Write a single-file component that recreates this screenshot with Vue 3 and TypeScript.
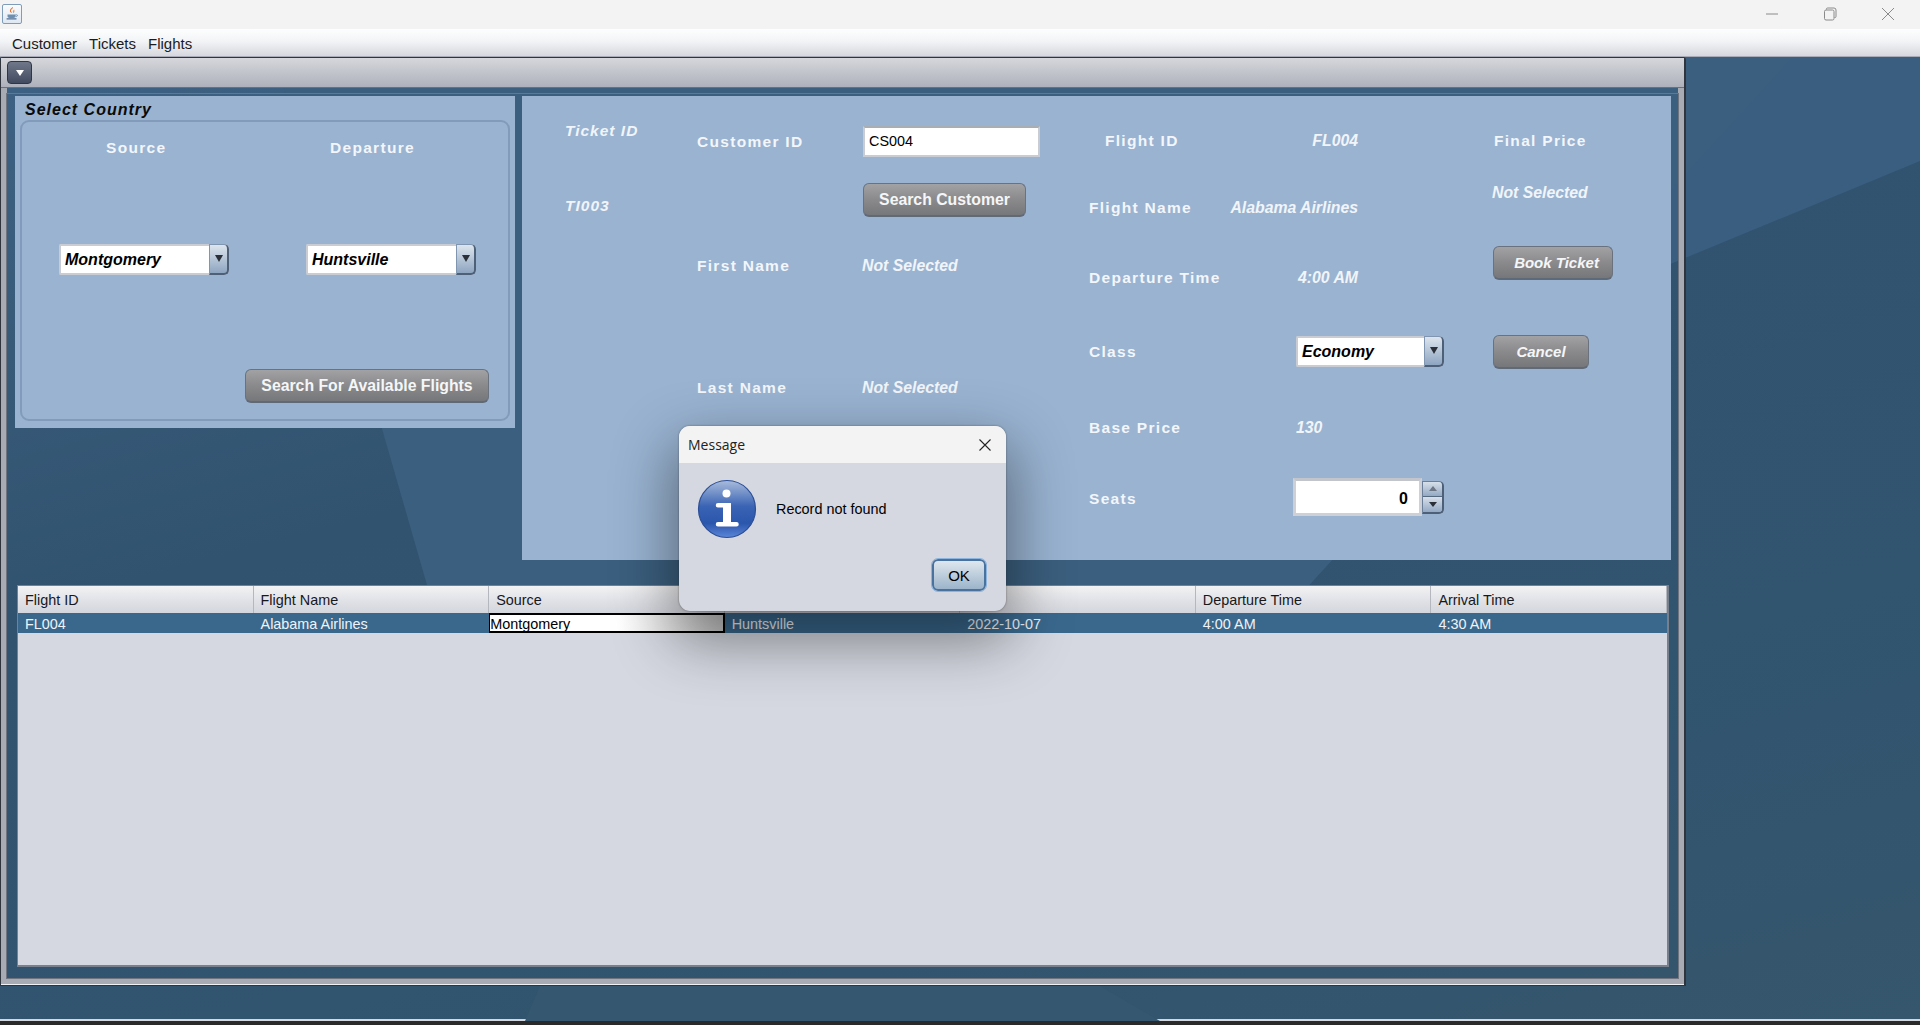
<template>
  <div class="app">
    <div class="titlebar">
      <div class="java-icon">
        <svg width="20" height="19" viewBox="0 0 20 19">
          <path d="M11 2c1 2-3 3-2 5 .4 1 1 1.500 1 2-2-1-3-2-2-4 .6-1.200 2.500-1.800 3-3z" fill="#e8742a" />
          <path d="M12.500 5c-1 1-2 1.500-1.500 3 .2.600.4 1 .2 1.300 1.300-.7 2-1.700 1.300-4.300z" fill="#f09a50" />
          <path d="M5 10.500h9v2c0 1.500-1.500 2-4.500 2S5 14 5 12.500z" fill="#6f8fb0" />
          <path d="M14 11h1.500c1 0 1 2-1.500 2" fill="none" stroke="#6f8fb0" />
          <path d="M4 15.500h11" stroke="#4f7196" stroke-width="1.300" />
        </svg>
      </div>
      <div class="win-controls">
        <svg class="min" width="14" height="14" viewBox="0 0 14 14"><path d="M1 7h12" stroke="#8a8a8a" /></svg>
        <svg class="max" width="14" height="14" viewBox="0 0 14 14">
          <path d="M3.500 2.500V2a1 1 0 0 1 1-1H11a2 2 0 0 1 2 2v6.500a1 1 0 0 1-1 1h-.5" fill="none" stroke="#8a8a8a" />
          <rect x="1.500" y="3" width="9.500" height="10" rx="1.500" fill="none" stroke="#8a8a8a" />
        </svg>
        <svg class="close" width="14" height="14" viewBox="0 0 14 14"><path d="M1 1l12 12M13 1L1 13" stroke="#8a8a8a" /></svg>
      </div>
    </div>

    <div class="menubar">
      <span v-for="m in menus" :key="m">{{ m }}</span>
    </div>

    <div class="desktop">
      <svg class="wallpaper" width="1920" height="964" viewBox="0 0 1920 964">
        <polygon points="1300,0 1920,0 1920,104 1300,360" fill="#3a5e80" />
        <polygon points="275,0 429,535 1303,535 1793,0" fill="#3b5f7e" />
        <polygon points="525,964 540,929 1100,929 1160,964" fill="#35576f" />
      </svg>

      <div class="frame">
        <div class="frame-title">
          <div class="frame-btn"><i></i></div>
        </div>
        <div class="frame-body">
          <div class="top-row">
            <section class="panel-left">
              <div class="group-title">Select Country</div>
              <div class="fieldset">
                <div class="route">
                  <div class="route-col">
                    <div class="label source">Source</div>
                    <div class="combo">
                      <span>Montgomery</span>
                      <div class="combo-arrow"><i></i></div>
                    </div>
                  </div>
                  <div class="route-col">
                    <div class="label departure">Departure</div>
                    <div class="combo">
                      <span>Huntsville</span>
                      <div class="combo-arrow"><i></i></div>
                    </div>
                  </div>
                </div>
                <button class="btn btn-flights">Search For Available Flights</button>
              </div>
            </section>

            <section class="panel-right">
              <div class="col-ticket">
                <div class="value spaced">Ticket ID</div>
                <div class="value spaced ticket-no">TI003</div>
              </div>

              <div class="col-customer">
                <div class="cust-row first">
                  <div class="label">Customer ID</div>
                  <div class="textfield">CS004</div>
                </div>
                <button class="btn btn-customer">Search Customer</button>
                <div class="cust-row name1">
                  <div class="label">First Name</div>
                  <div class="value">Not Selected</div>
                </div>
                <div class="cust-row name2">
                  <div class="label">Last Name</div>
                  <div class="value">Not Selected</div>
                </div>
              </div>

              <div class="col-flight">
                <div class="fl-row">
                  <div class="label flight-id">Flight ID</div>
                  <div class="value right">FL004</div>
                </div>
                <div class="fl-row">
                  <div class="label">Flight Name</div>
                  <div class="value right">Alabama Airlines</div>
                </div>
                <div class="fl-row">
                  <div class="label">Departure Time</div>
                  <div class="value right">4:00 AM</div>
                </div>
                <div class="fl-row">
                  <div class="label">Class</div>
                  <div class="combo combo-class">
                    <span>Economy</span>
                    <div class="combo-arrow"><i></i></div>
                  </div>
                </div>
                <div class="fl-row">
                  <div class="label">Base Price</div>
                  <div class="value slot">130</div>
                </div>
                <div class="fl-row">
                  <div class="label">Seats</div>
                  <div class="spinner">
                    <div class="spinner-field">0</div>
                    <div class="spinner-btns">
                      <div class="up"><i></i></div>
                      <div class="down"><i></i></div>
                    </div>
                  </div>
                </div>
              </div>

              <div class="col-price">
                <div class="label final">Final Price</div>
                <div class="value price">Not Selected</div>
                <button class="btn btn-italic btn-book">Book Ticket</button>
                <button class="btn btn-italic btn-cancel">Cancel</button>
              </div>
            </section>
          </div>

          <div class="table">
            <div class="thead">
              <div v-for="c in columns" :key="c" class="th">{{ c }}</div>
            </div>
            <div class="tr">
              <template v-for="(cell, i) in row" :key="i">
                <div v-if="i === 2" class="td editing">{{ cell }}</div>
                <div v-else class="td">{{ cell }}</div>
              </template>
            </div>
          </div>
        </div>
      </div>
    </div>

    <div class="taskline"></div>

    <div class="dialog">
      <div class="dialog-title">
        <span>Message</span>
        <svg width="14" height="14" viewBox="0 0 14 14"><path d="M1.500 1.500l11 11M12.500 1.500l-11 11" stroke="#222" stroke-width="1.100" /></svg>
      </div>
      <div class="dialog-body">
        <div class="dialog-msg">
          <svg width="60" height="60" viewBox="0 0 60 60">
            <defs>
              <linearGradient id="info" x1="0" y1="0" x2="0" y2="1">
                <stop offset="0" stop-color="#a9bcdc" />
                <stop offset="0.45" stop-color="#3a64b4" />
                <stop offset="0.75" stop-color="#2a56ac" />
                <stop offset="1" stop-color="#5b86d8" />
              </linearGradient>
            </defs>
            <circle cx="30" cy="30" r="28.500" fill="url(#info)" stroke="#2c4f96" stroke-width="1.200" />
            <circle cx="29.500" cy="14.500" r="4" fill="#fff" />
            <path d="M21 24h13v19h5.500a2 2 0 0 1 0 4.500H21a2 2 0 0 1 0-4.500h5V28.500h-5a2.200 2.200 0 0 1 0-4.500z" fill="#fff" />
          </svg>
          <span>Record not found</span>
        </div>
        <button class="ok">OK</button>
      </div>
    </div>
  </div>
</template>

<script setup lang="ts">
const menus: string[] = ['Customer', 'Tickets', 'Flights']

const columns: string[] = [
  'Flight ID',
  'Flight Name',
  'Source',
  'Departure',
  'Date',
  'Departure Time',
  'Arrival Time'
]

const row: string[] = [
  'FL004',
  'Alabama Airlines',
  'Montgomery',
  'Huntsville',
  '2022-10-07',
  '4:00 AM',
  '4:30 AM'
]
</script>

<style>
html,
body {
  margin: 0;
  overflow: hidden;
}
</style>

<style scoped>
.app {
  position: relative;
  width: 1920px;
  height: 1025px;
  display: flex;
  flex-direction: column;
  overflow: hidden;
  font-family: 'Liberation Sans', Arial, sans-serif;
}

.titlebar {
  height: 29px;
  flex: none;
  background: #f3f3f3;
  display: flex;
  align-items: center;
  justify-content: space-between;
}

.java-icon {
  width: 18px;
  height: 18px;
  margin: -2px 0 0 2px;
  border: 1px solid #7f9db9;
  border-radius: 2px;
  background: linear-gradient(#fafbfd, #dfe8f2);
  display: flex;
  align-items: center;
  justify-content: center;
  overflow: hidden;
}

.win-controls {
  display: flex;
  align-items: center;
  margin-right: 25px;
  gap: 44px;
  margin-top: -1px;
}

.menubar {
  height: 28px;
  flex: none;
  box-sizing: border-box;
  padding: 1px 0 0 12px;
  display: flex;
  align-items: center;
  gap: 12px;
  font-size: 15px;
  color: #1b1b1f;
  background: linear-gradient(#fdfefe, #f3f4f6 45%, #d6d8df);
  border-bottom: 1px solid #a9acb6;
}

.desktop {
  position: relative;
  flex: 1;
  background: linear-gradient(165deg, #3e6284 0%, #31536f 38%, #31546f 70%, #35566c 100%);
}

.wallpaper {
  position: absolute;
  left: 0;
  top: 0;
}

.frame {
  position: relative;
  box-sizing: border-box;
  width: 1686px;
  height: 929px;
  border: 1px solid #30343c;
  border-width: 1px 2px 2px 1px;
  border-radius: 3px 3px 0 0;
  display: flex;
  flex-direction: column;
}

.frame-title {
  height: 29px;
  flex: none;
  background: linear-gradient(#d6d7dc, #aeb1bb);
  border-bottom: 1px solid #6d7079;
  display: flex;
  align-items: center;
  padding-left: 6px;
}

.frame-btn {
  width: 23px;
  height: 21px;
  border: 1px solid #2f3644;
  border-radius: 4px;
  background: linear-gradient(#6f7789, #434b61);
  display: flex;
  align-items: center;
  justify-content: center;
}

.frame-btn i {
  width: 0;
  height: 0;
  border-left: 4px solid transparent;
  border-right: 4px solid transparent;
  border-top: 6px solid #fff;
}

.frame-body {
  flex: 1;
  min-height: 0;
  box-sizing: border-box;
  border: solid #a8abb4;
  border-width: 0 6px 6px 6px;
  outline: 1px solid #70747e;
  outline-offset: -6px;
  box-shadow: 0 1px 0 #f0f1f4;
  padding: 8px 0 0 8px;
}

.top-row {
  display: flex;
  gap: 7px;
  height: 464px;
  align-items: flex-start;
}

.panel-left {
  width: 500px;
  height: 332px;
  box-sizing: border-box;
  background: #99b3d1;
  padding: 5px 5px 7px;
  display: flex;
  flex-direction: column;
}

.group-title {
  height: 19px;
  line-height: 18px;
  padding-left: 5px;
  font-size: 16px;
  font-weight: bold;
  font-style: italic;
  letter-spacing: 1px;
  color: #0a0a0a;
}

.fieldset {
  flex: 1;
  box-sizing: border-box;
  border: 2px solid #829bba;
  border-radius: 9px;
  display: flex;
  flex-direction: column;
  padding: 16px 0 0 37px;
}

.route {
  display: flex;
  gap: 77px;
}

.route-col {
  width: 170px;
}

.label {
  font-size: 15.500px;
  font-weight: bold;
  letter-spacing: 1.300px;
  line-height: 20px;
  color: #f3f6fa;
  white-space: nowrap;
}

.label.source {
  padding-left: 47px;
}

.label.departure {
  padding-left: 24px;
}

.route-col .combo {
  margin-top: 86px;
}

.combo {
  box-sizing: border-box;
  width: 170px;
  height: 31px;
  display: flex;
  background: #fff;
  border: 2px solid #c9cdd3;
  border-right: 0;
  border-radius: 2px 5px 5px 2px;
}

.combo span {
  flex: 1;
  padding: 4px 0 0 4px;
  line-height: 20px;
  font-size: 16px;
  font-weight: bold;
  font-style: italic;
  color: #000;
}

.combo-arrow {
  width: 20px;
  margin: -2px 0;
  box-sizing: border-box;
  border: 1px solid #8096b0;
  border-right: 2px solid #4e6078;
  border-bottom: 2px solid #4e6078;
  border-radius: 0 5px 5px 0;
  background: linear-gradient(#dde5ee, #8ea5c0);
  display: flex;
  justify-content: center;
  padding-top: 10px;
}

.combo-arrow i {
  width: 0;
  height: 0;
  border-left: 4px solid transparent;
  border-right: 4px solid transparent;
  border-top: 7px solid #2a2f38;
}

.btn {
  box-sizing: border-box;
  border: 1px solid #69727e;
  border-bottom: 2px solid #5f6a78;
  border-radius: 6px;
  background: linear-gradient(#a2a2a4, #8a8a8c 50%, #76777a);
  color: #f5f6f8;
  font-family: 'Liberation Sans', Arial, sans-serif;
  font-weight: bold;
  font-size: 15.800px;
  white-space: nowrap;
  padding: 0;
}

.btn-flights {
  width: 244px;
  height: 34px;
  margin: 94px 0 0 186px;
}

.panel-right {
  width: 1149px;
  height: 464px;
  background: #99b3d1;
  display: flex;
}

.value {
  font-size: 15.800px;
  font-weight: bold;
  font-style: italic;
  line-height: 20px;
  color: #f1f5f9;
  white-space: nowrap;
}

.value.spaced {
  font-size: 15.500px;
  letter-spacing: 1px;
}

.col-ticket {
  width: 175px;
  box-sizing: border-box;
  padding: 25px 0 0 43px;
}

.ticket-no {
  margin-top: 55px;
}

.col-customer {
  width: 392px;
  display: flex;
  flex-direction: column;
  padding-top: 30px;
  box-sizing: border-box;
}

.cust-row {
  display: flex;
  align-items: center;
}

.cust-row .label {
  width: 166px;
}

.cust-row.first {
  height: 31px;
}

.name1 {
  margin-top: 39px;
  height: 20px;
}

.name2 {
  margin-top: 102px;
  height: 20px;
}

.cust-row .value {
  margin-left: -1px;
}

.textfield {
  box-sizing: border-box;
  width: 177px;
  height: 31px;
  background: #fff;
  border: 2px solid #c9cdd3;
  border-top-color: #a9adb4;
  padding-left: 4px;
  font-size: 14.400px;
  line-height: 27px;
  color: #000;
}

.btn-customer {
  width: 163px;
  height: 34px;
  margin: 26px 0 0 166px;
}

.col-flight {
  width: 405px;
  box-sizing: border-box;
  padding-top: 25px;
  display: flex;
  flex-direction: column;
}

.fl-row {
  width: 355px;
  height: 40px;
  flex: none;
  display: flex;
  align-items: center;
  justify-content: space-between;
}

.fl-row:nth-child(2) {
  margin-top: 27px;
}

.fl-row:nth-child(3) {
  margin-top: 30px;
}

.fl-row:nth-child(4) {
  margin-top: 34px;
}

.fl-row:nth-child(5) {
  margin-top: 36px;
}

.fl-row:nth-child(6) {
  margin-top: 31px;
}

.flight-id {
  padding-left: 16px;
}

.value.right {
  text-align: right;
  min-width: 61px;
  margin-right: 86px;
}

.combo-class {
  width: 148px;
  margin-top: -2px;
  margin-left: auto;
}

.value.slot {
  width: 148px;
}

.spinner {
  display: flex;
  align-items: center;
  height: 38px;
  margin-top: -4px;
  margin-left: auto;
}

.spinner-field {
  box-sizing: border-box;
  width: 129px;
  height: 38px;
  background: #fff;
  border: 3px solid #cdd0d6;
  border-top-color: #c2c5cb;
  text-align: right;
  padding-right: 11px;
  line-height: 36px;
  font-size: 16px;
  font-weight: bold;
  color: #000;
}

.spinner-btns {
  width: 22px;
  height: 33px;
  display: flex;
  flex-direction: column;
  box-sizing: border-box;
  border: 1px solid #6b7f98;
  border-right: 2px solid #4e6078;
  border-bottom: 2px solid #4e6078;
  border-radius: 0 5px 5px 0;
  overflow: hidden;
}

.spinner-btns div {
  flex: 1;
  display: flex;
  align-items: center;
  justify-content: center;
  background: linear-gradient(#d8e0ea, #93a9c3);
}

.spinner-btns .down {
  border-top: 1px solid #55697f;
}

.spinner-btns .up i {
  width: 0;
  height: 0;
  border-left: 4px solid transparent;
  border-right: 4px solid transparent;
  border-bottom: 5px solid #6d7684;
}

.spinner-btns .down i {
  width: 0;
  height: 0;
  border-left: 4px solid transparent;
  border-right: 4px solid transparent;
  border-top: 5px solid #2a2f38;
}

.col-price {
  flex: 1;
  display: flex;
  flex-direction: column;
  align-items: flex-start;
  padding-top: 35px;
}

.value.price {
  margin: 32px 0 0 -2px;
}

.btn-italic {
  font-style: italic;
  font-size: 15px;
  margin-left: -1px;
}

.btn-book {
  width: 120px;
  height: 34px;
  margin-top: 43px;
  padding-left: 7px;
}

.btn-cancel {
  width: 96px;
  height: 34px;
  margin-top: 55px;
}

.table {
  box-sizing: border-box;
  width: 1652px;
  height: 382px;
  margin: 25px 0 0 2px;
  background: #d5d8e1;
  border: 1px solid #78808e;
  border-bottom-width: 2px;
  border-right-width: 2px;
  font-size: 14.400px;
}

.thead,
.tr {
  display: grid;
  grid-template-columns: repeat(7, 1fr);
}

.th {
  box-sizing: border-box;
  height: 27px;
  line-height: 29px;
  padding-left: 7px;
  color: #17181c;
  background: linear-gradient(#f3f3f5, #e2e3e8 50%, #d4d6de);
  border-right: 1px solid #b5b7bf;
}

.tr {
  height: 20px;
  background: #3a688d;
}

.td {
  box-sizing: border-box;
  padding-left: 7px;
  line-height: 23px;
  height: 20px;
  color: #f0f3f6;
  white-space: nowrap;
  min-width: 0;
}

.td.editing {
  padding-left: 0;
  line-height: 19px;
  border: 2px solid #000;
  border-left-width: 1px;
  background: linear-gradient(90deg, #fff 55%, #c9c9c9);
  color: #000;
  overflow: hidden;
}

.taskline {
  height: 6px;
  flex: none;
  box-sizing: border-box;
  border-top: 2px solid #d4d8de;
  background: #2a2a2a;
}

.dialog {
  position: absolute;
  left: 679px;
  top: 426px;
  width: 327px;
  height: 185px;
  border-radius: 11px;
  background: #d5d8e1;
  box-shadow: 0 0 2px rgba(40, 40, 40, 0.6), 0 24px 60px 6px rgba(0, 0, 0, 0.42);
  display: flex;
  flex-direction: column;
}

.dialog-title {
  height: 37px;
  flex: none;
  background: #f3f3f3;
  border-radius: 11px 11px 0 0;
  display: flex;
  align-items: center;
  justify-content: space-between;
  padding: 0 14px 0 9px;
  font-family: 'Open Sans', 'Noto Sans', sans-serif;
  font-size: 14px;
  color: #222;
}

.dialog-body {
  flex: 1;
  display: flex;
  flex-direction: column;
  padding: 16px 20px 0 18px;
}

.dialog-msg {
  display: flex;
  align-items: center;
  gap: 19px;
  font-size: 14.400px;
  color: #000;
}

.ok {
  align-self: flex-end;
  box-sizing: border-box;
  width: 54px;
  height: 32px;
  margin-top: 20px;
  padding: 0;
  border: 2px solid #4a729e;
  border-radius: 6px;
  outline: 1px solid #8db4dc;
  background: linear-gradient(#dfe7ee, #9cb4ca);
  font-family: 'Liberation Sans', Arial, sans-serif;
  font-size: 15px;
  color: #000;
}
</style>
